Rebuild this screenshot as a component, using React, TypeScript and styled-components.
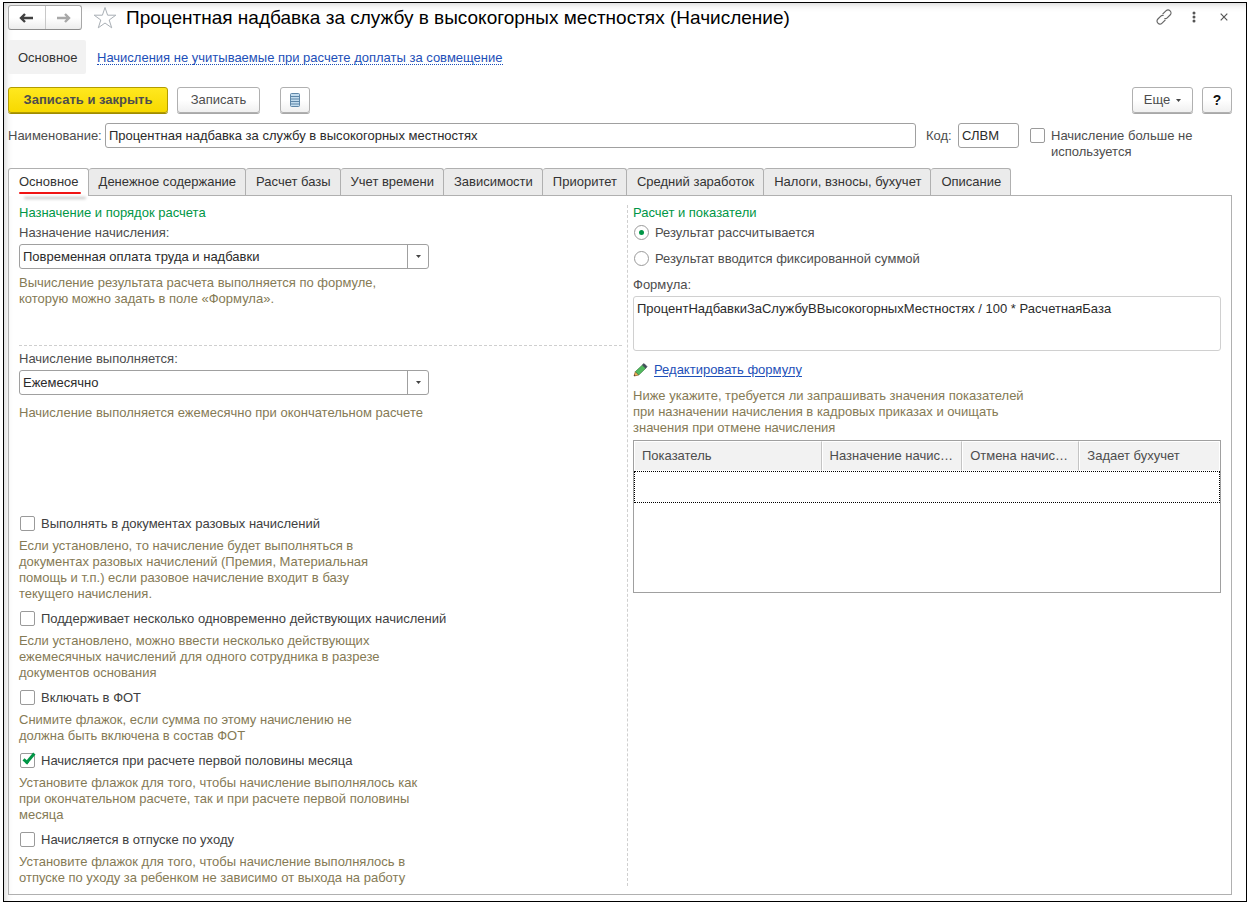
import React from 'react';
import styled, { createGlobalStyle } from 'styled-components';

const GlobalStyle = createGlobalStyle`
  *, *::before, *::after { box-sizing: border-box; }
  body { margin: 0; background: #fff; }
  body, button, input, select, textarea {
    font-family: "Liberation Sans", Arial, sans-serif;
    font-size: 13px;
    line-height: 16px;
    color: #4d4d4d;
  }
`;

const Page = styled.div`
  display: flex;
  min-height: 100vh;
  padding: 2px 0 0 3px;
`;

const Window = styled.main`
  flex: 1;
  min-width: 0;
  display: flex;
  flex-direction: column;
  padding: 2px 14px 6px 4px;
  border: 1px solid #000;
  box-shadow: inset 8px 8px 8px -8px #c4c4c4;
`;

const TitleBar = styled.header`
  display: flex;
  align-items: center;
  height: 25px;
`;

const History = styled.div`
  display: flex;
  width: 74px;
  height: 25px;
  border: 1px solid #a8a8a8;
  border-bottom-color: #8c8c8c;
  border-radius: 3px;
  background: linear-gradient(#fff 50%, #ededed);
`;

const HistoryButton = styled.button`
  flex: 1;
  display: flex;
  align-items: center;
  justify-content: center;
  padding: 0;
  border: 0;
  background: none;
  & + & { border-left: 1px solid #c8c8c8; }
`;

const BareButton = styled.button`
  display: flex;
  align-items: center;
  justify-content: center;
  width: 24px;
  height: 24px;
  padding: 0;
  border: 0;
  background: none;
`;

const StarButton = styled(BareButton)`
  margin: 0 9px 0 11px;
`;

const Title = styled.h1`
  flex: 1;
  min-width: 0;
  margin: 0;
  font-size: 19px;
  font-weight: 400;
  line-height: 24px;
  color: #000;
`;

const WindowTools = styled.div`
  display: flex;
  gap: 6px;
  margin-right: -4px;
  padding-bottom: 2px;
`;

const Sections = styled.nav`
  display: flex;
  align-items: center;
  gap: 11px;
  margin-top: 10px;
  height: 34px;
`;

const CurrentSection = styled.span`
  padding: 10px 8px 8px 10px;
  min-width: 78px;
  border-radius: 2px;
  background: #f2f2f2;
  color: #333;
`;

const SectionLink = styled.a`
  padding-top: 1px;
  line-height: 13px;
  color: #1d4fb8;
  text-decoration: none;
  border-bottom: 1px dotted #1d4fb8;
`;

const CommandBar = styled.div`
  display: flex;
  align-items: center;
  gap: 9px;
  margin-top: 13px;
`;

const CommandButton = styled.button<{ $primary?: boolean; $width: number }>`
  display: flex;
  align-items: center;
  justify-content: center;
  gap: 6px;
  min-width: ${(p) => p.$width}px;
  height: 26px;
  margin-bottom: 1px;
  padding: 0 5px;
  border: 1px solid ${(p) => (p.$primary ? '#b29c00' : '#b0b0b0')};
  border-radius: 3px;
  box-shadow: 0 1px 0 ${(p) => (p.$primary ? '#a08c00' : '#a8a8a8')};
  background: ${(p) => (p.$primary ? 'linear-gradient(#ffe81f, #f7d900)' : 'linear-gradient(#fff 50%, #f0f0f0)')};
  font-weight: ${(p) => (p.$primary ? 700 : 400)};
`;

const HelpButton = styled(CommandButton)`
  font-weight: 700;
  font-size: 14px;
  color: #111;
`;

const Spacer = styled.div<{ $grow?: boolean }>`
  flex: ${(p) => (p.$grow ? '1' : '0 0 2px')};
`;

const NameRow = styled.div`
  display: flex;
  align-items: flex-start;
  margin-top: 9px;
  height: 45px;
`;

const FieldLabel = styled.label`
  display: block;
`;

const InlineLabel = styled(FieldLabel)<{ $width: number }>`
  min-width: ${(p) => p.$width}px;
  padding-top: 5px;
`;

const TextInput = styled.input<{ $width?: number }>`
  flex: ${(p) => (p.$width ? `0 0 ${p.$width}px` : '1')};
  min-width: 0;
  height: 25px;
  margin-right: 10px;
  padding: 0 3px;
  border: 1px solid #a0a0a0;
  border-radius: 3px;
  background: #fff;
  color: #2b2b2b;
`;

const Choice = styled.label`
  display: flex;
  align-items: flex-start;
  gap: 6px;
`;

const UnusedChoice = styled(Choice)`
  flex: 0 0 202px;
  margin: 5px 0 0 1px;
`;

const Box = styled.input`
  appearance: none;
  flex: none;
  display: grid;
  place-items: center;
  width: 15px;
  height: 15px;
  margin: 0;
  border: 1px solid #9a9a9a;
  background: #fff;
`;

const Checkbox = styled(Box).attrs({ type: 'checkbox' })`
  border-radius: 2px;
  &:checked::before {
    content: '';
    width: 6px;
    height: 13px;
    margin: -6px 0 0 3px;
    border: solid #009646;
    border-width: 0 3px 3px 0;
    transform: rotate(40deg);
  }
`;

const Radio = styled(Box).attrs({ type: 'radio' })`
  border-radius: 50%;
  &:checked::before {
    content: '';
    width: 5px;
    height: 5px;
    border-radius: 50%;
    background: #009646;
  }
`;

const TabList = styled.div`
  display: flex;
`;

const Tab = styled.button<{ $active?: boolean }>`
  position: relative;
  height: 27px;
  padding: 0 9px;
  border: 1px solid #b0b0b0;
  border-bottom: 0;
  border-radius: 3px 3px 0 0;
  background: ${(p) => (p.$active ? '#fff' : '#ebebeb')};
  color: #333;
  white-space: nowrap;
  & + & { border-left: 0; padding-left: 10px; }
  ${(p) => p.$active && `
    height: 28px;
    margin-bottom: -1px;
    padding: 0 9px 1px 10px;
    z-index: 1;
    &::after {
      content: '';
      position: absolute;
      left: 10px;
      right: 7px;
      bottom: 2px;
      height: 2px;
      border-radius: 1px;
      background: #f01414;
      box-shadow: 5px 5px 3px rgba(0, 0, 0, 0.25);
    }
  `}
`;

const Panel = styled.section`
  flex: 1;
  display: grid;
  grid-template-columns: 29fr 28fr;
  column-gap: 5px;
  padding: 9px 10px 8px;
  border: 1px solid #b0b0b0;
`;

const Purpose = styled.div`
  border-right: 1px dashed #cfcfcf;
`;

const Calculation = styled.div`
  min-width: 0;
`;

const Heading = styled.h2`
  margin: 0 0 4px;
  font-size: 13px;
  font-weight: 400;
  line-height: 16px;
  color: #009646;
`;

const SelectBox = styled.div`
  position: relative;
  max-width: 410px;
  height: 25px;
  margin-top: 3px;
`;

const Select = styled.select`
  appearance: none;
  width: 100%;
  height: 25px;
  padding: 0 24px 0 3px;
  border: 1px solid #a0a0a0;
  border-radius: 3px;
  background: #fff;
  color: #2b2b2b;
`;

const SelectArrow = styled.span`
  position: absolute;
  top: 1px;
  right: 1px;
  display: flex;
  align-items: center;
  justify-content: center;
  width: 21px;
  height: 23px;
  border-left: 1px solid #a0a0a0;
  pointer-events: none;
`;

const Hint = styled.p<{ $gap: number }>`
  margin: ${(p) => p.$gap}px 0 0;
  color: #857a55;
  white-space: pre-line;
`;

const PurposeGroup = styled.div`
  height: 141px;
  margin: 0 5px 5px 0;
  border-bottom: 1px dashed #cfcfcf;
`;

const ScheduleGroup = styled.div`
  height: 165px;
`;

const Options = styled.div`
  display: flex;
  flex-direction: column;
  gap: 9px;
`;

const OptionChoice = styled(Choice)`
  height: 16px;
  padding-left: 1px;
  color: #404040;
`;

const RadioGroup = styled.div`
  display: flex;
  flex-direction: column;
  gap: 10px;
  margin-bottom: 10px;
`;

const RadioChoice = styled(Choice)`
  padding-left: 1px;
`;

const Formula = styled.textarea`
  display: block;
  width: 100%;
  height: 55px;
  margin: 3px 0 0;
  padding: 4px 3px;
  border: 1px solid #d0d0d0;
  border-radius: 3px;
  background: #fff;
  color: #2b2b2b;
  resize: none;
`;

const EditRow = styled.div`
  display: flex;
  align-items: center;
  gap: 6px;
  height: 16px;
  margin: 11px 0 10px;
`;

const EditLink = styled.a`
  color: #1d4fb8;
  text-underline-offset: 2px;
`;

const TableFrame = styled.div`
  height: 153px;
  margin-top: 4px;
  border: 1px solid #a0a0a0;
`;

const Table = styled.table`
  width: 100%;
  table-layout: fixed;
  border-collapse: separate;
  border-spacing: 0;
`;

const HeadCell = styled.th<{ $width?: string }>`
  width: ${(p) => p.$width ?? 'auto'};
  height: 30px;
  padding: 0 3px 0 7px;
  border: 1px solid #fff;
  border-right-color: #c4c4c4;
  background: #f2f2f2;
  font-weight: 400;
  text-align: left;
  white-space: nowrap;
  &:last-child { border-right-color: #fff; }
`;

const EmptyCell = styled.td`
  height: 32px;
  padding: 0;
  border: 1px dotted #000;
`;

const tabs = [
  'Основное', 'Денежное содержание', 'Расчет базы', 'Учет времени', 'Зависимости',
  'Приоритет', 'Средний заработок', 'Налоги, взносы, бухучет', 'Описание',
];

const options = [
  {
    label: 'Выполнять в документах разовых начислений',
    hint: 'Если установлено, то начисление будет выполняться в\nдокументах разовых начислений (Премия, Материальная\nпомощь и т.п.) если разовое начисление входит в базу\nтекущего начисления.',
  },
  {
    label: 'Поддерживает несколько одновременно действующих начислений',
    hint: 'Если установлено, можно ввести несколько действующих\nежемесячных начислений для одного сотрудника в разрезе\nдокументов основания',
  },
  {
    label: 'Включать в ФОТ',
    hint: 'Снимите флажок, если сумма по этому начислению не\nдолжна быть включена в состав ФОТ',
  },
  {
    label: 'Начисляется при расчете первой половины месяца',
    checked: true,
    hint: 'Установите флажок для того, чтобы начисление выполнялось как\nпри окончательном расчете, так и при расчете первой половины\nмесяца',
  },
  {
    label: 'Начисляется в отпуске по уходу',
    hint: 'Установите флажок для того, чтобы начисление выполнялось в\nотпуске по уходу за ребенком не зависимо от выхода на работу',
  },
];

const Arrow = ({ color, flip }: { color: string; flip?: boolean }) => (
  <svg width="15" height="10" viewBox="0 0 15 10" aria-hidden="true">
    <path
      d={flip ? 'M1 5H13M9 1L13 5L9 9' : 'M14 5H2M6 1L2 5L6 9'}
      fill="none"
      stroke={color}
      strokeWidth="2.4"
    />
  </svg>
);

const Caret = () => (
  <svg width="5" height="3" viewBox="0 0 5 3" aria-hidden="true">
    <path d="M0 0H5L2.5 3Z" fill="#444" />
  </svg>
);

const StarIcon = () => (
  <svg width="24" height="24" viewBox="0 0 24 24" aria-hidden="true">
    <path
      d="M12 1.5L14.6 9.2H22.8L16.2 14L18.7 21.8L12 17L5.3 21.8L7.8 14L1.2 9.2H9.4Z"
      fill="#fff"
      stroke="#a9afb5"
    />
  </svg>
);

const LinkIcon = () => (
  <svg width="16" height="16" viewBox="0 0 16 16" fill="none" stroke="#666" strokeWidth="1.2" aria-hidden="true">
    <path d="M6.6 5.2L9.9 1.9C11.2 .6 12.9 .6 14.1 1.8C15.3 3 15.3 4.8 14.1 6L11.2 8.9C10.4 9.7 9.4 9.9 8.4 9.5" />
    <path d="M9.4 10.8L6.1 14.1C4.8 15.4 3.1 15.4 1.9 14.2C.7 13 .7 11.2 1.9 10L4.8 7.1C5.6 6.3 6.6 6.1 7.6 6.5" />
  </svg>
);

const DotsIcon = () => (
  <svg width="4" height="12" viewBox="0 0 4 12" fill="#555" aria-hidden="true">
    <circle cx="2" cy="2" r="1.5" />
    <circle cx="2" cy="6" r="1.5" />
    <circle cx="2" cy="10" r="1.5" />
  </svg>
);

const CloseIcon = () => (
  <svg width="8" height="8" viewBox="0 0 8 8" aria-hidden="true">
    <path d="M.7 .7L7.3 7.3M7.3 .7L.7 7.3" stroke="#555" strokeWidth="1.2" />
  </svg>
);

const ListIcon = () => (
  <svg width="10" height="14" viewBox="0 0 10 14" aria-hidden="true">
    <rect x=".5" y=".5" width="9" height="13" rx="1" fill="#c3dcee" stroke="#5f87a8" />
    <path d="M1 3.5H9M1 6H9M1 8.5H9M1 11H9" stroke="#5f87a8" />
  </svg>
);

const PencilIcon = () => (
  <svg width="15" height="14" viewBox="0 0 15 14" aria-hidden="true">
    <path d="M1 13L2.4 8.6L5.8 12Z" fill="#f2b35a" stroke="#8a5a24" strokeWidth=".7" />
    <path d="M1 13L1.5 11.6L2.5 12.6Z" fill="#333" />
    <path d="M2.4 8.6L9.4 2L12.8 5.2L5.8 12Z" fill="#52bb5e" stroke="#2f6e39" strokeWidth=".6" />
    <path d="M9.4 2L11 .6L14 3.6L12.8 5.2Z" fill="#3f4b58" stroke="#3f4b58" strokeWidth=".7" />
  </svg>
);

export default function App() {
  return (
    <>
      <GlobalStyle />
      <Page>
        <Window>
          <TitleBar>
            <History>
              <HistoryButton type="button" aria-label="Назад"><Arrow color="#404040" /></HistoryButton>
              <HistoryButton type="button" aria-label="Вперед"><Arrow color="#a8a8a8" flip /></HistoryButton>
            </History>
            <StarButton type="button" aria-label="В избранное"><StarIcon /></StarButton>
            <Title>Процентная надбавка за службу в высокогорных местностях (Начисление)</Title>
            <WindowTools>
              <BareButton type="button" aria-label="Ссылка"><LinkIcon /></BareButton>
              <BareButton type="button" aria-label="Меню"><DotsIcon /></BareButton>
              <BareButton type="button" aria-label="Закрыть"><CloseIcon /></BareButton>
            </WindowTools>
          </TitleBar>

          <Sections>
            <CurrentSection>Основное</CurrentSection>
            <SectionLink href="#excluded">Начисления не учитываемые при расчете доплаты за совмещение</SectionLink>
          </Sections>

          <CommandBar>
            <CommandButton type="button" $primary $width={160}>Записать и закрыть</CommandButton>
            <CommandButton type="button" $width={83}>Записать</CommandButton>
            <Spacer />
            <CommandButton type="button" $width={30} aria-label="Список"><ListIcon /></CommandButton>
            <Spacer $grow />
            <CommandButton type="button" $width={61}>Еще<Caret /></CommandButton>
            <HelpButton type="button" $width={30}>?</HelpButton>
          </CommandBar>

          <NameRow>
            <InlineLabel htmlFor="name" $width={97}>Наименование:</InlineLabel>
            <TextInput id="name" defaultValue="Процентная надбавка за службу в высокогорных местностях" />
            <InlineLabel htmlFor="code" $width={32}>Код:</InlineLabel>
            <TextInput id="code" $width={61} defaultValue="СЛВМ" />
            <UnusedChoice>
              <Checkbox />
              <span>Начисление больше не используется</span>
            </UnusedChoice>
          </NameRow>

          <TabList role="tablist">
            {tabs.map((name, i) => (
              <Tab key={name} type="button" role="tab" aria-selected={i === 0} $active={i === 0}>{name}</Tab>
            ))}
          </TabList>

          <Panel role="tabpanel">
            <Purpose>
              <PurposeGroup>
                <Heading>Назначение и порядок расчета</Heading>
                <FieldLabel htmlFor="purpose">Назначение начисления:</FieldLabel>
                <SelectBox>
                  <Select id="purpose"><option>Повременная оплата труда и надбавки</option></Select>
                  <SelectArrow><Caret /></SelectArrow>
                </SelectBox>
                <Hint $gap={6}>{'Вычисление результата расчета выполняется по формуле,\nкоторую можно задать в поле «Формула».'}</Hint>
              </PurposeGroup>
              <ScheduleGroup>
                <FieldLabel htmlFor="schedule">Начисление выполняется:</FieldLabel>
                <SelectBox>
                  <Select id="schedule"><option>Ежемесячно</option></Select>
                  <SelectArrow><Caret /></SelectArrow>
                </SelectBox>
                <Hint $gap={10}>Начисление выполняется ежемесячно при окончательном расчете</Hint>
              </ScheduleGroup>
              <Options>
                {options.map((o) => (
                  <div key={o.label}>
                    <OptionChoice>
                      <Checkbox defaultChecked={o.checked} />
                      <span>{o.label}</span>
                    </OptionChoice>
                    <Hint $gap={6}>{o.hint}</Hint>
                  </div>
                ))}
              </Options>
            </Purpose>

            <Calculation>
              <Heading>Расчет и показатели</Heading>
              <RadioGroup>
                <RadioChoice><Radio name="result" defaultChecked /><span>Результат рассчитывается</span></RadioChoice>
                <RadioChoice><Radio name="result" /><span>Результат вводится фиксированной суммой</span></RadioChoice>
              </RadioGroup>
              <FieldLabel htmlFor="formula">Формула:</FieldLabel>
              <Formula id="formula" defaultValue="ПроцентНадбавкиЗаСлужбуВВысокогорныхМестностях / 100 * РасчетнаяБаза" />
              <EditRow>
                <PencilIcon />
                <EditLink href="#formula">Редактировать формулу</EditLink>
              </EditRow>
              <Hint $gap={0}>{'Ниже укажите, требуется ли запрашивать значения показателей\nпри назначении начисления в кадровых приказах и очищать\nзначения при отмене начисления'}</Hint>
              <TableFrame>
                <Table>
                  <thead>
                    <tr>
                      <HeadCell $width="32%">Показатель</HeadCell>
                      <HeadCell $width="24%">Назначение начис…</HeadCell>
                      <HeadCell $width="20%">Отмена начис…</HeadCell>
                      <HeadCell>Задает бухучет</HeadCell>
                    </tr>
                  </thead>
                  <tbody>
                    <tr><EmptyCell colSpan={4} /></tr>
                  </tbody>
                </Table>
              </TableFrame>
            </Calculation>
          </Panel>
        </Window>
      </Page>
    </>
  );
}
